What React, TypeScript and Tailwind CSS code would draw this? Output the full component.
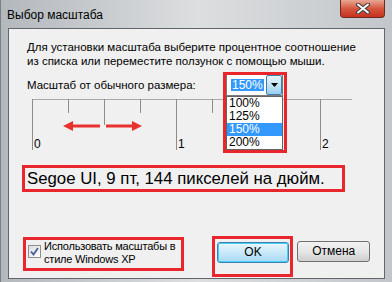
import React from 'react';

const ticks = [0, 1, 2, 3, 4, 5, 6, 7, 8];
const options = ['100%', '125%', '150%', '200%'];

function Ruler() {
  return (
    <svg width="333" height="56" className="block">
      <line x1="5" y1="3.5" x2="325" y2="3.5" stroke="#a8a8a8" />
      {ticks.map((k) => {
        const x = 5.5 + 36 * k;
        const end = k % 4 === 0 ? 54 : k % 2 === 0 ? 29 : 17;
        return <line key={k} x1={x} y1="3" x2={x} y2={end} stroke="#8c8c8c" />;
      })}
      <text x="7" y="52" fontSize="12" fill="#000">0</text>
      <text x="151" y="52" fontSize="12" fill="#000">1</text>
      <text x="295" y="52" fontSize="12" fill="#000">2</text>
      {/* стрелки */}
      <line x1="44" y1="30" x2="73" y2="30" stroke="#e8322f" strokeWidth="3" />
      <polygon points="36,30 46,25 46,35" fill="#e8322f" />
      <line x1="79" y1="30" x2="107" y2="30" stroke="#e8322f" strokeWidth="3" />
      <polygon points="115,30 105,25 105,35" fill="#e8322f" />
    </svg>
  );
}

function Combo() {
  return (
    <div className="relative shrink-0 w-[57px] h-[22px] bg-white border border-[#7a7a7a] flex items-center">
      <span className="ml-[4px] px-[1px] leading-[12px] h-[12px] text-[12px] bg-[#3399ff] text-white">150%</span>
      <div className="ml-auto w-[16px] h-[20px] border border-[#3c7fb1] rounded-[2px] bg-gradient-to-b from-[#e5f4fc] via-[#c4e5f6] to-[#98d1ef] flex items-center justify-center">
        <svg width="7" height="4"><polygon points="0,0 7,0 3.5,4" fill="#000" /></svg>
      </div>
      <div className="absolute left-[-1px] top-[21px] w-[57px] bg-white border border-[#646464] z-10 text-[12px]">
        {options.map((o) => (
          <div
            key={o}
            className={`h-[13px] leading-[13px] pl-[2px] ${o === '150%' ? 'bg-[#3399ff] text-white' : 'text-black'}`}
          >
            {o}
          </div>
        ))}
      </div>
      <div className="absolute left-[-4px] top-[-3px] w-[64px] h-[81px] border-[3px] border-[#e8262b] z-20 pointer-events-none" />
    </div>
  );
}

export default function App() {
  return (
    <div className="w-[392px] h-[282px] overflow-hidden whitespace-nowrap bg-gradient-to-r from-[#b3b8bd] via-[#dcdedf] to-[#c2c6ca] border-l border-[#7b8086] font-['Liberation_Sans',Arial,sans-serif] text-[11.5px] text-black">
      {/* заголовок */}
      <div className="h-[28px] flex items-start justify-between">
        <span className="mt-[7px] ml-[6px] text-[12px] leading-[16px]">Выбор масштаба</span>
        <div className="mr-[7px] w-[45px] h-[18px] rounded-b-[4px] border border-t-0 border-[#6b2a22] bg-gradient-to-b from-[#e8a694] via-[#d6563f] to-[#c7311c] flex items-center justify-center">
          <svg width="14" height="11">
            <path d="M2 1.5 L12 9.5 M12 1.5 L2 9.5" stroke="#3b3b3b" strokeWidth="4" strokeLinecap="round" />
            <path d="M2 1.5 L12 9.5 M12 1.5 L2 9.5" stroke="#ffffff" strokeWidth="2" strokeLinecap="round" />
          </svg>
        </div>
      </div>

      {/* клиентская область */}
      <div className="ml-[7px] mr-[7px] h-[251px] border border-[#62666b] bg-[#f0f0f0] px-[14px] pt-[11px]">
        <p className="ml-[4px] leading-[14px]">
          Для установки масштаба выберите процентное соотношение
          <br />
          из списка или переместите ползунок с помощью мыши.
        </p>

        <div className="mt-[6px] ml-[4px] w-[256px] flex items-center justify-between">
          <span className="leading-[14px]">Масштаб от обычного размера:</span>
          <Combo />
        </div>

        <div className="ml-[4px]">
          <Ruler />
        </div>

        <div className="mt-[13px] ml-[-1px] w-[323px] h-[27px] border-[3px] border-[#e8262b] flex items-center pl-[2px]">
          <span className="text-[16.8px] leading-[20px]">Segoe UI, 9 пт, 144 пикселей на дюйм.</span>
        </div>

        <div className="mt-[44px] flex items-start">
          <div className="mt-[1px] w-[162px] h-[34px] border-[3px] border-[#e8262b] flex items-start">
            <div className="mt-[5px] ml-[2px] w-[13px] h-[13px] shrink-0 border border-[#8e8f8f] bg-gradient-to-br from-[#dcdcdc] to-[#ffffff] flex items-center justify-center">
              <svg width="9" height="9">
                <path d="M1 4.5 L3.5 7.5 L8 1" stroke="#4a5f97" strokeWidth="1.8" fill="none" />
              </svg>
            </div>
            <span className="ml-[3px] leading-[13px] text-[11px] tracking-[-0.2px]">
              Использовать масштабы в
              <br />
              стиле Windows XP
            </span>
          </div>

          <div className="ml-[28px] w-[82px] h-[41px] border-[3px] border-[#e8262b] pt-[3px] pl-[2px]">
            <button className="w-[72px] h-[21px] rounded-[3px] border border-[#3c7fb1] bg-gradient-to-b from-[#eaf6fd] via-[#c9e8f8] to-[#a7d9f5] shadow-[inset_0_0_0_1px_#48d0f8] leading-[19px] text-[12px]">
              OK
            </button>
          </div>

          <button className="ml-[4px] mt-[5px] w-[73px] h-[21px] rounded-[3px] border border-[#707070] bg-gradient-to-b from-[#f2f2f2] via-[#e6e6e6] to-[#cfcfcf] leading-[19px] text-[12px]">
            Отмена
          </button>
        </div>
      </div>
    </div>
  );
}
